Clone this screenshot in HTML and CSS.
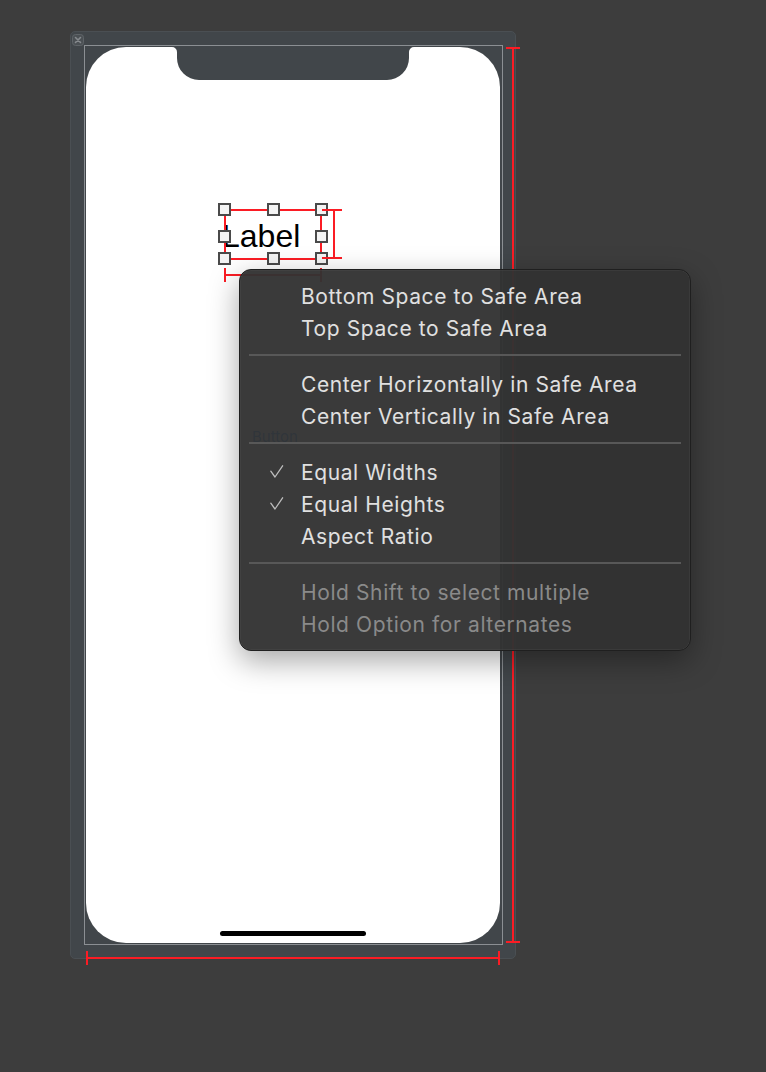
FILE: index.html
```html
<!DOCTYPE html>
<html lang="en">
<head>
<meta charset="utf-8">
<title>Storyboard</title>
<link rel="stylesheet" href="styles.css">
</head>
<body>
<div class="canvas">
  <div class="device">
    <svg class="close" width="12" height="12" viewBox="0 0 12 12">
      <rect x="0.5" y="0.5" width="11" height="11" rx="3" fill="#4b5054" stroke="#5f6468"/>
      <path d="M3.5 3.5 L8.5 8.5 M8.5 3.5 L3.5 8.5" stroke="#868a8e" stroke-width="1.6" stroke-linecap="round"/>
    </svg>
  </div>
  <div class="device-border"></div>
  <div class="screen">
    <svg class="notch" width="242" height="33" viewBox="0 0 242 33">
      <path d="M0 0 H242 A5 5 0 0 0 237 5 V11 A22 22 0 0 1 215 33 H27 A22 22 0 0 1 5 11 V5 A5 5 0 0 0 0 0 Z" fill="#41464a"/>
    </svg>
    <div class="home-bar"></div>
  </div>

  <div class="ghost-button">Button</div>

  <div class="label-text">Label</div>
  <div class="sel-rect"></div>
  <div class="handle h-tl"></div>
  <div class="handle h-tm"></div>
  <div class="handle h-tr"></div>
  <div class="handle h-ml"></div>
  <div class="handle h-mr"></div>
  <div class="handle h-bl"></div>
  <div class="handle h-bm"></div>
  <div class="handle h-br"></div>

  <div class="red lbl-v"></div>
  <div class="red lbl-v-cap1"></div>
  <div class="red lbl-v-cap2"></div>
  <div class="red lbl-h"></div>
  <div class="red lbl-h-cap1"></div>
  <div class="red lbl-h-cap2"></div>

  <div class="red dev-v"></div>
  <div class="red dev-v-cap1"></div>
  <div class="red dev-v-cap2"></div>
  <div class="red dev-h"></div>
  <div class="red dev-h-cap1"></div>
  <div class="red dev-h-cap2"></div>

  <div class="menu">
    <div class="item"><span class="mark"></span><span class="text">Bottom Space to Safe Area</span></div>
    <div class="item"><span class="mark"></span><span class="text">Top Space to Safe Area</span></div>
    <div class="sep"></div>
    <div class="item"><span class="mark"></span><span class="text">Center Horizontally in Safe Area</span></div>
    <div class="item"><span class="mark"></span><span class="text">Center Vertically in Safe Area</span></div>
    <div class="sep"></div>
    <div class="item"><span class="mark"><svg width="14" height="14" viewBox="0 0 14 14"><path d="M0.8 6.2 L5 12 L12.6 0.8" fill="none" stroke="#bdbdbd" stroke-width="1.3" stroke-linecap="round" stroke-linejoin="round"/></svg></span><span class="text">Equal Widths</span></div>
    <div class="item"><span class="mark"><svg width="14" height="14" viewBox="0 0 14 14"><path d="M0.8 6.2 L5 12 L12.6 0.8" fill="none" stroke="#bdbdbd" stroke-width="1.3" stroke-linecap="round" stroke-linejoin="round"/></svg></span><span class="text">Equal Heights</span></div>
    <div class="item"><span class="mark"></span><span class="text">Aspect Ratio</span></div>
    <div class="sep"></div>
    <div class="item disabled"><span class="mark"></span><span class="text">Hold Shift to select multiple</span></div>
    <div class="item disabled"><span class="mark"></span><span class="text">Hold Option for alternates</span></div>
  </div>
</div>
</body>
</html>
```
FILE: styles.css
```css
html, body {
  margin: 0;
  padding: 0;
  background: #3d3d3d;
}

.canvas {
  position: relative;
  width: 766px;
  height: 1072px;
  overflow: hidden;
  font-family: "Inter", "Liberation Sans", sans-serif;
}

/* device frame */
.device {
  position: absolute;
  left: 70px;
  top: 31px;
  width: 446px;
  height: 928px;
  box-sizing: border-box;
  background: #41464a;
  border: 1px solid #4a4f53;
  border-radius: 5px;
}

.close {
  position: absolute;
  left: 1px;
  top: 2px;
  display: block;
}

.device-border {
  position: absolute;
  left: 84px;
  top: 45px;
  width: 419px;
  height: 900px;
  box-sizing: border-box;
  border: 1px solid #8b8f93;
}

.screen {
  position: absolute;
  left: 86px;
  top: 47px;
  width: 414px;
  height: 896px;
  background: #ffffff;
  border-radius: 40px;
}

.notch {
  position: absolute;
  left: 86px;
  top: 0;
  display: block;
}

.home-bar {
  position: absolute;
  left: 134px;
  top: 884px;
  width: 146px;
  height: 5px;
  border-radius: 3px;
  background: #000000;
}

.ghost-button {
  position: absolute;
  left: 252px;
  top: 428px;
  font-size: 15px;
  line-height: 18px;
  color: #007aff;
}

/* label and selection */
.label-text {
  position: absolute;
  left: 222px;
  top: 220px;
  font-family: "Liberation Sans", Arial, sans-serif;
  font-size: 32px;
  line-height: 32px;
  color: #000000;
}

.sel-rect {
  position: absolute;
  left: 224px;
  top: 209px;
  width: 98px;
  height: 51px;
  box-sizing: border-box;
  border: 2px solid #fb1c24;
}

.handle {
  position: absolute;
  width: 13px;
  height: 13px;
  box-sizing: border-box;
  border: 2px solid #4a4a4a;
  background: #f4f4f4;
}
.h-tl { left: 218px; top: 203px; }
.h-tm { left: 267px; top: 203px; }
.h-tr { left: 315px; top: 203px; }
.h-ml { left: 218px; top: 230px; }
.h-mr { left: 315px; top: 230px; }
.h-bl { left: 218px; top: 252px; }
.h-bm { left: 267px; top: 252px; }
.h-br { left: 315px; top: 252px; }

/* constraint guides */
.red {
  position: absolute;
  background: #fb1c24;
}
.lbl-v      { left: 333px; top: 210px; width: 2px; height: 49px; }
.lbl-v-cap1 { left: 322px; top: 209px; width: 20px; height: 2px; }
.lbl-v-cap2 { left: 322px; top: 257px; width: 20px; height: 2px; }
.lbl-h      { left: 225px; top: 274px; width: 96px; height: 2px; }
.lbl-h-cap1 { left: 224px; top: 268px; width: 2px; height: 14px; }
.lbl-h-cap2 { left: 320px; top: 268px; width: 2px; height: 14px; }

.dev-v      { left: 512px; top: 48px; width: 2px; height: 894px; }
.dev-v-cap1 { left: 506px; top: 47px; width: 14px; height: 2px; }
.dev-v-cap2 { left: 506px; top: 941px; width: 14px; height: 2px; }
.dev-h      { left: 86px; top: 957px; width: 414px; height: 2px; }
.dev-h-cap1 { left: 86px; top: 951px; width: 2px; height: 14px; }
.dev-h-cap2 { left: 498px; top: 951px; width: 2px; height: 14px; }

/* context menu */
.menu {
  position: absolute;
  left: 239px;
  top: 269px;
  width: 452px;
  box-sizing: border-box;
  padding: 10px 0;
  display: flex;
  flex-direction: column;
  background: rgba(50, 50, 50, 0.96);
  border: 1px solid #1f1f1f;
  border-radius: 12px;
  box-shadow: 0 10px 30px rgba(0, 0, 0, 0.35), 0 0 0 0.5px rgba(255, 255, 255, 0.08) inset;
}

.item {
  height: 32px;
  display: flex;
  align-items: center;
  font-size: 21px;
  letter-spacing: 0.6px;
  color: #e0e0e0;
  white-space: nowrap;
}

.item.disabled {
  color: #8a8a8a;
}

.mark {
  width: 61px;
  flex: none;
  display: flex;
  align-items: center;
  padding-left: 30px;
  box-sizing: border-box;
}

.mark svg {
  display: block;
}

.sep {
  height: 2px;
  margin: 10px 9px 12px;
  background: #585858;
}
```
